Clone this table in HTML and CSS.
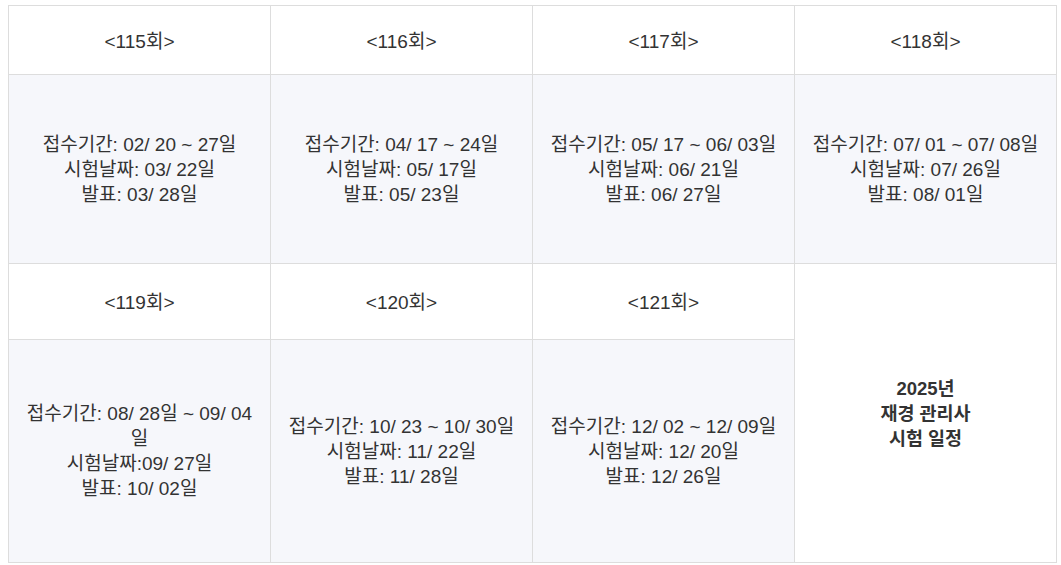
FILE: index.html
```html
<!DOCTYPE html>
<html lang="ko">
<head>
<meta charset="utf-8">
<link rel="stylesheet" href="styles.css">
</head>
<body>
<table class="schedule">
  <tr class="head-row head-row--first">
    <th>&lt;115회&gt;</th>
    <th>&lt;116회&gt;</th>
    <th>&lt;117회&gt;</th>
    <th>&lt;118회&gt;</th>
  </tr>
  <tr class="body-row body-row--first">
    <td>접수기간: 02/ 20 ~ 27일<br>시험날짜: 03/ 22일<br>발표: 03/ 28일</td>
    <td>접수기간: 04/ 17 ~ 24일<br>시험날짜: 05/ 17일<br>발표: 05/ 23일</td>
    <td>접수기간: 05/ 17 ~ 06/ 03일<br>시험날짜: 06/ 21일<br>발표: 06/ 27일</td>
    <td>접수기간: 07/ 01 ~ 07/ 08일<br>시험날짜: 07/ 26일<br>발표: 08/ 01일</td>
  </tr>
  <tr class="head-row head-row--second">
    <th>&lt;119회&gt;</th>
    <th>&lt;120회&gt;</th>
    <th>&lt;121회&gt;</th>
    <td class="title" rowspan="2">2025년<br>재경 관리사<br>시험 일정</td>
  </tr>
  <tr class="body-row body-row--second">
    <td>접수기간: 08/ 28일 ~ 09/ 04일<br>시험날짜:09/ 27일<br>발표: 10/ 02일</td>
    <td>접수기간: 10/ 23 ~ 10/ 30일<br>시험날짜: 11/ 22일<br>발표: 11/ 28일</td>
    <td>접수기간: 12/ 02 ~ 12/ 09일<br>시험날짜: 12/ 20일<br>발표: 12/ 26일</td>
  </tr>
</table>
</body>
</html>
```

FILE: styles.css
```css
html, body {
  background: #ffffff;
}
body {
  margin: 5px 4px 0 8px;
  font-family: "Liberation Sans", Arial, "Noto Sans CJK KR", sans-serif;
  color: #333333;
}
.schedule {
  width: 1049px;
  border-collapse: collapse;
  table-layout: fixed;
}
.schedule th,
.schedule td {
  border: 1px solid #dddddd;
  text-align: center;
  vertical-align: middle;
  font-size: 19px;
  line-height: 25px;
  font-weight: normal;
  padding: 0 12px;
}
.head-row th {
  background: #ffffff;
  padding-top: 2px;
}
.head-row--first {
  height: 69px;
}
.head-row--second {
  height: 76px;
}
.body-row td {
  background: #f6f7fb;
}
.body-row--first {
  height: 189px;
}
.body-row--second {
  height: 223px;
}
.schedule .title {
  background: #ffffff;
  font-weight: bold;
  font-size: 18.5px;
  line-height: 25px;
  color: #333333;
}
```
